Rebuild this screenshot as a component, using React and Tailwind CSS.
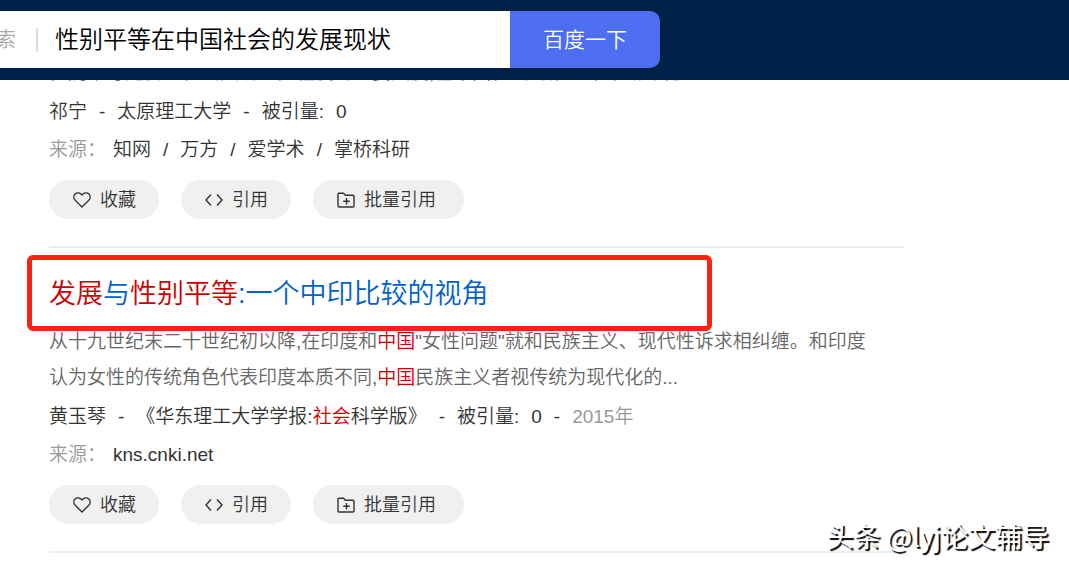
import React from "react";

const iconProps = {
  viewBox: "0 0 18 18",
  fill: "none",
  stroke: "currentColor",
  strokeWidth: 1.4,
  className: "size-[18px] shrink-0",
  "aria-hidden": true,
};

function HeartIcon() {
  return (
    <svg {...iconProps} strokeLinejoin="round">
      <path d="M9 16 2 9.1C.5 7.4.5 4.7 2 3.1c1.700-1.600 4.400-1.600 6 0l1 1 1-1c1.600-1.600 4.300-1.600 6 0 1.500 1.600 1.500 4.300 0 6L9 16Z" />
    </svg>
  );
}

function QuoteIcon() {
  return (
    <svg {...iconProps}>
      <path d="M6 3.500 1 9l5 5.500M12 3.500 17 9l-5 5.500" />
    </svg>
  );
}

function FolderPlusIcon() {
  return (
    <svg {...iconProps} strokeLinejoin="round">
      <path d="M1 3.300Q1 2.300 2 2.300h4.500l1.800 2H16q1 0 1 1V15q0 1-1 1H2q-1 0-1-1V3.300Z" />
      <path d="M9.500 7v6.600M6.200 10.300h6.600" />
    </svg>
  );
}

function Mark({ children }) {
  return <em className="not-italic text-[#c00]">{children}</em>;
}

function Action({ icon, children, wide }) {
  return (
    <button
      type="button"
      className={`flex h-[39px] items-center gap-[9px] rounded-full bg-[#f0f0f0] pl-6 text-lg text-[#333] ${
        wide ? "pr-7" : "pr-[23px]"
      }`}
    >
      {icon}
      {children}
    </button>
  );
}

function Actions() {
  return (
    <div className="mt-[11px] flex flex-wrap gap-[22px]">
      <Action icon={<HeartIcon />}>收藏</Action>
      <Action icon={<QuoteIcon />}>引用</Action>
      <Action icon={<FolderPlusIcon />} wide>
        批量引用
      </Action>
    </div>
  );
}

function Sources({ items }) {
  return (
    <div className="flex items-center whitespace-nowrap leading-[38px]">
      <span className="mr-[7px] text-[#999]">来源：</span>
      <div className="flex gap-3">
        {items.map((item, i) => (
          <React.Fragment key={item}>
            {i > 0 && <span>/</span>}
            <a href="#">{item}</a>
          </React.Fragment>
        ))}
      </div>
    </div>
  );
}

export default function App() {
  return (
    <div className="relative min-h-screen overflow-hidden bg-white font-['Liberation_Sans','Noto_Sans_CJK_SC',sans-serif] text-[19px] font-[350] text-[#333]">
      <header className="relative z-10 bg-[#002147] pt-[11px] pb-3">
        <form className="flex h-[57px] w-[660px] max-w-full" onSubmit={(e) => e.preventDefault()}>
          <div className="flex min-w-0 flex-1 items-center bg-white">
            <label htmlFor="q" className="flex w-4 justify-end overflow-hidden text-xl text-[#aaa]">
              索
            </label>
            <span className="ml-5 h-6 w-0.5 bg-[#ddd]" />
            <input
              id="q"
              className="ml-[17px] h-full min-w-0 flex-1 bg-transparent pb-1 text-2xl text-black outline-none"
              defaultValue="性别平等在中国社会的发展现状"
            />
          </div>
          <button type="submit" className="w-[150px] rounded-r-[10px] bg-[#4e6ef2] text-[21px] text-white">
            百度一下
          </button>
        </form>
      </header>

      <main className="-mt-[25px] ml-[49px] max-w-[855px]">
        <article className="border-b-2 border-[#eee] pb-[27px]">
          <p className="h-9 overflow-hidden whitespace-nowrap leading-9 text-[#666]">
            <Mark>性</Mark>别平等是衡量社会文明进步程度的重要尺度,在<Mark>中国社会</Mark>的推进中不断深化
          </p>
          <div className="mt-0.5 flex gap-3 whitespace-nowrap leading-[38px]">
            <a href="#">祁宁</a>
            <span>-</span>
            <a href="#">太原理工大学</a>
            <span>-</span>
            <span>被引量:</span>
            <span>0</span>
          </div>
          <Sources items={["知网", "万方", "爱学术", "掌桥科研"]} />
          <Actions />
        </article>

        <article className="border-b-2 border-[#eee] pt-7 pb-[27px]">
          <div className="relative">
            <h3 className="text-[27px] leading-9 text-[#0060cc]">
              <a href="#">
                <Mark>发展</Mark>与<Mark>性别平等</Mark>:一个中印比较的视角
              </a>
            </h3>
            <div className="pointer-events-none absolute -top-[21px] -left-[22px] h-[76px] w-[685px] rounded-md border-[5px] border-[#ff2010]" />
          </div>
          <p className="mt-3 leading-9 text-[#666]">
            从十九世纪末二十世纪初以降,在印度和<Mark>中国</Mark>"女性问题"就和民族主义、现代性诉求相纠缠。和印度
            <br />
            认为女性的传统角色代表印度本质不同,<Mark>中国</Mark>民族主义者视传统为现代化的...
          </p>
          <div className="mt-0.5 flex gap-3 whitespace-nowrap leading-[38px]">
            <a href="#">黄玉琴</a>
            <span>-</span>
            <a href="#">
              《华东理工大学学报:<Mark>社会</Mark>科学版》
            </a>
            <span>-</span>
            <span>被引量:</span>
            <span>0</span>
            <span>-</span>
            <span className="text-[#999]">2015年</span>
          </div>
          <Sources items={["kns.cnki.net"]} />
          <Actions />
        </article>
      </main>

      <div className="absolute right-5 bottom-3 font-['Noto_Sans_CJK_SC',sans-serif] text-[27px] leading-10 font-normal whitespace-nowrap text-white [text-shadow:2px_2px_1px_#000]">
        头条 @lyj论文辅导
      </div>
    </div>
  );
}
